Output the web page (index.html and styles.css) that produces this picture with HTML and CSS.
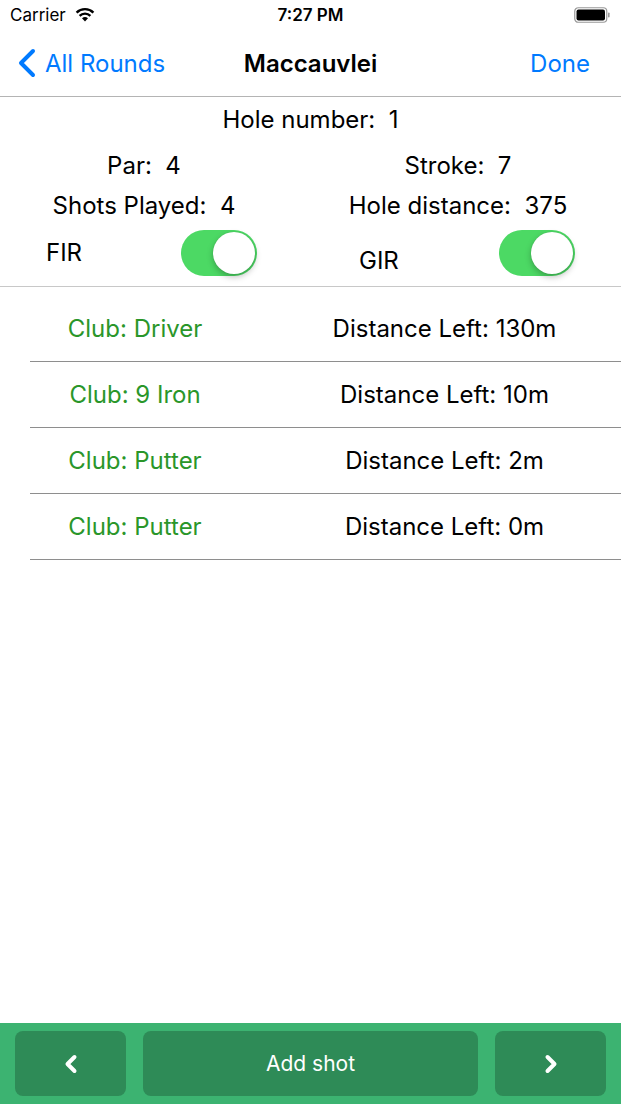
FILE: index.html
```html
<!DOCTYPE html>
<html>
<head>
<meta charset="utf-8">
<link rel="stylesheet" href="styles.css">
</head>
<body>
<div class="screen">
  <div class="status">
    <div class="status-left">
      <span class="carrier">Carrier</span>
      <svg class="wifi" width="20" height="15" viewBox="0 0 20 15">
        <path d="M10 14.5 L7 11.3 A4.4 4.4 0 0 1 13 11.3 Z" fill="#000"/>
        <path d="M4.6 8.8 A7.8 7.8 0 0 1 15.4 8.8" fill="none" stroke="#000" stroke-width="2.4"/>
        <path d="M1.6 5.6 A12 12 0 0 1 18.4 5.6" fill="none" stroke="#000" stroke-width="2.4"/>
      </svg>
    </div>
    <div class="time">7:27 PM</div>
    <div class="status-right">
      <svg width="36" height="16" viewBox="0 0 36 16">
        <rect x="0.75" y="0.75" width="32" height="14.5" rx="3.5" fill="none" stroke="#999" stroke-width="1.2"/>
        <rect x="2.5" y="2.5" width="28.5" height="11" rx="2" fill="#000"/>
        <rect x="34" y="5.5" width="1.6" height="5" rx="0.8" fill="#999"/>
      </svg>
    </div>
  </div>

  <div class="nav">
    <div class="back">
      <svg width="20" height="30" viewBox="0 0 20 30">
        <path d="M16 3 L4 15 L16 27" fill="none" stroke="#007aff" stroke-width="4" stroke-linecap="round" stroke-linejoin="round"/>
      </svg>
      <span>All Rounds</span>
    </div>
    <div class="title">Maccauvlei</div>
    <div class="done">Done</div>
  </div>

  <div class="info">
    <div class="hole">Hole number:&nbsp; 1</div>
    <div class="grid grid-a">
      <div class="cell">Par:&nbsp; 4</div>
      <div class="cell">Stroke:&nbsp; 7</div>
    </div>
    <div class="grid grid-b">
      <div class="cell">Shots Played:&nbsp; 4</div>
      <div class="cell">Hole distance:&nbsp; 375</div>
    </div>
    <div class="grid toggles">
      <div class="tcell tcell-left">
        <span class="tlabel">FIR</span>
        <span class="switch"><span class="knob"></span></span>
      </div>
      <div class="tcell tcell-right">
        <span class="tlabel tlabel-low">GIR</span>
        <span class="switch"><span class="knob"></span></span>
      </div>
    </div>
  </div>

  <div class="shots">
    <div class="shot">
      <div class="club">Club: Driver</div>
      <div class="dist">Distance Left: 130m</div>
    </div>
    <div class="shot">
      <div class="club">Club: 9 Iron</div>
      <div class="dist">Distance Left: 10m</div>
    </div>
    <div class="shot">
      <div class="club">Club: Putter</div>
      <div class="dist">Distance Left: 2m</div>
    </div>
    <div class="shot">
      <div class="club">Club: Putter</div>
      <div class="dist">Distance Left: 0m</div>
    </div>
  </div>

  <div class="spacer"></div>

  <div class="toolbar">
    <div class="btn btn-side">
      <svg width="14" height="20" viewBox="0 0 14 20">
        <path d="M10.5 3 L3.5 10 L10.5 17" fill="none" stroke="#fff" stroke-width="4" stroke-linecap="round" stroke-linejoin="round"/>
      </svg>
    </div>
    <div class="btn btn-main">Add shot</div>
    <div class="btn btn-side">
      <svg width="14" height="20" viewBox="0 0 14 20">
        <path d="M3.5 3 L10.5 10 L3.5 17" fill="none" stroke="#fff" stroke-width="4" stroke-linecap="round" stroke-linejoin="round"/>
      </svg>
    </div>
  </div>
</div>
</body>
</html>
```

FILE: styles.css
```css
* { box-sizing: border-box; }
html, body { margin: 0; padding: 0; }
body {
  font-family: "Inter", "Roboto", "Liberation Sans", sans-serif;
  color: #000;
  background: #fff;
}
.screen {
  width: 621px;
  height: 1104px;
  display: flex;
  flex-direction: column;
  overflow: hidden;
}

/* status bar */
.status {
  height: 30px;
  display: flex;
  align-items: center;
  justify-content: space-between;
  position: relative;
  padding: 0 10px;
}
.status-left { display: flex; align-items: center; gap: 9px; }
.carrier { font-size: 17px; }
.wifi { margin-top: -1px; }
.time {
  position: absolute;
  left: 0; right: 0;
  text-align: center;
  font-size: 17px;
  font-weight: 600;
}
.status-right { display: flex; align-items: center; margin-right: 1px; }

/* nav bar */
.nav {
  height: 67px;
  border-bottom: 1px solid #b4b4b4;
  display: flex;
  align-items: center;
  justify-content: space-between;
  position: relative;
  padding: 0 31px 0 19px;
  font-size: 24px;
}
.back { display: flex; align-items: center; gap: 8px; color: #007aff; }
.back svg { margin-left: -2px; }
.title {
  position: absolute;
  left: 0; right: 0;
  text-align: center;
  font-weight: 600;
  pointer-events: none;
}
.done { color: #007aff; }

/* info */
.info {
  border-bottom: 1px solid #c8c8c8;
  padding: 8px 0 10px;
  font-size: 24px;
}
.hole { text-align: center; line-height: 30px; }
.grid {
  display: grid;
  grid-template-columns: 288px 312px;
  column-gap: 14px;
}
.grid-a { margin-top: 16px; }
.grid-b { margin-top: 10px; }
.cell { text-align: center; line-height: 30px; }
.toggles { margin-top: 9px; }
.tcell { display: flex; align-items: center; height: 46px; }
.tcell-left { padding-left: 46px; }
.tcell-left .switch { margin-left: auto; margin-right: 31px; }
.tcell-right { padding-left: 57px; }
.tcell-right .switch { margin-left: auto; margin-right: 39px; }
.tlabel { line-height: 30px; }
.tlabel-low { margin-top: 16px; }
.switch {
  width: 76px;
  height: 46px;
  border-radius: 23px;
  background: #4cd964;
  position: relative;
  display: block;
}
.knob {
  position: absolute;
  top: 2px;
  right: 2px;
  width: 42px;
  height: 42px;
  border-radius: 50%;
  background: #fff;
  box-shadow: 0 3px 6px rgba(0,0,0,0.25), 0 0 1px rgba(0,0,0,0.2);
}

/* shots */
.shots { padding-top: 9px; }
.shot {
  height: 66px;
  margin-left: 30px;
  border-bottom: 1px solid #8e8e8e;
  display: grid;
  grid-template-columns: 210px 1fr;
  align-items: center;
  font-size: 24px;
}
.club { color: #2a962a; text-align: center; }
.dist { text-align: center; padding-left: 28px; }

.spacer { flex: 1; }

/* toolbar */
.toolbar {
  height: 81px;
  background: #3cb371;
  display: flex;
  gap: 17px;
  padding: 8px 15px;
}
.btn {
  height: 65px;
  background: #2e8b57;
  border-radius: 8px;
  display: flex;
  align-items: center;
  justify-content: center;
  color: #fff;
  font-size: 21px;
}
.btn-side { width: 111px; }
.btn-main { flex: 1; }
```
